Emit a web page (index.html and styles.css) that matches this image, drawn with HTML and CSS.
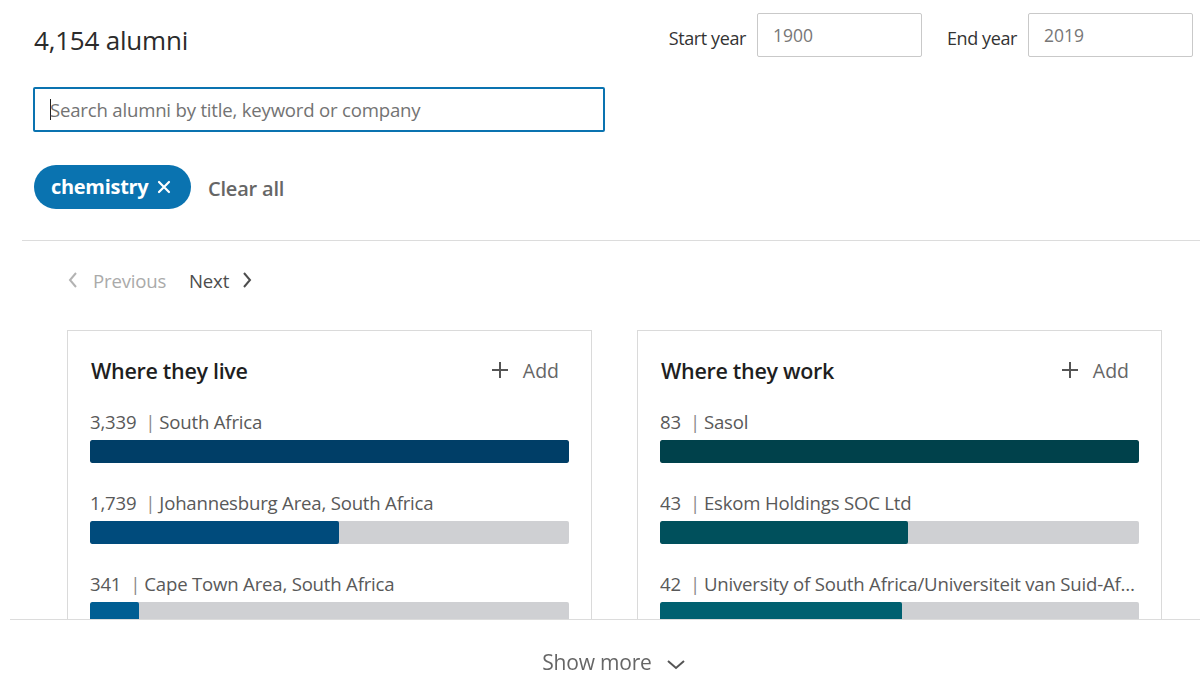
FILE: index.html
```html
<!DOCTYPE html>
<html lang="en">
<head>
<meta charset="utf-8">
<title>Alumni</title>
<link rel="stylesheet" href="styles.css">
</head>
<body>
<div class="page">
  <header class="head">
    <h1 class="count">4,154 alumni</h1>
    <div class="years">
      <label class="year-label">Start year</label>
      <div class="year-input">1900</div>
      <label class="year-label end">End year</label>
      <div class="year-input">2019</div>
    </div>
  </header>

  <div class="search"><span class="caret"></span><span class="placeholder">Search alumni by title, keyword or company</span></div>

  <div class="filters">
    <span class="chip">chemistry <svg class="chip-x" viewBox="0 0 14 14" width="14" height="14"><path d="M2 2 L12 12 M12 2 L2 12" stroke="#fff" stroke-width="2.2" stroke-linecap="round"/></svg></span>
    <span class="clear">Clear all</span>
  </div>

  <div class="divider"></div>

  <nav class="pager">
    <span class="prev"><svg viewBox="0 0 10 16" width="10" height="16"><path d="M8 1 L2 8 L8 15" fill="none" stroke="#b3b3b3" stroke-width="2"/></svg>Previous</span>
    <span class="next">Next<svg viewBox="0 0 10 16" width="10" height="16"><path d="M2 1 L8 8 L2 15" fill="none" stroke="#4d4d4d" stroke-width="2"/></svg></span>
  </nav>

  <section class="cards">
    <div class="card">
      <div class="card-head">
        <h2 class="card-title">Where they live</h2>
        <span class="add"><svg viewBox="0 0 16 16" width="16" height="16"><path d="M8 0 V16 M0 8 H16" stroke="#555" stroke-width="2"/></svg>Add</span>
      </div>
      <div class="row">
        <div class="label"><span class="num">3,339</span><span class="sep">|</span>South Africa</div>
        <div class="track"><div class="fill live1" style="width:100%"></div></div>
      </div>
      <div class="row">
        <div class="label"><span class="num">1,739</span><span class="sep">|</span>Johannesburg Area, South Africa</div>
        <div class="track"><div class="fill live2" style="width:52%"></div></div>
      </div>
      <div class="row">
        <div class="label"><span class="num">341</span><span class="sep">|</span>Cape Town Area, South Africa</div>
        <div class="track"><div class="fill live3" style="width:10.3%"></div></div>
      </div>
    </div>

    <div class="card">
      <div class="card-head">
        <h2 class="card-title">Where they work</h2>
        <span class="add"><svg viewBox="0 0 16 16" width="16" height="16"><path d="M8 0 V16 M0 8 H16" stroke="#555" stroke-width="2"/></svg>Add</span>
      </div>
      <div class="row">
        <div class="label"><span class="num">83</span><span class="sep">|</span>Sasol</div>
        <div class="track"><div class="fill work1" style="width:100%"></div></div>
      </div>
      <div class="row">
        <div class="label"><span class="num">43</span><span class="sep">|</span>Eskom Holdings SOC Ltd</div>
        <div class="track"><div class="fill work2" style="width:51.8%"></div></div>
      </div>
      <div class="row">
        <div class="label"><span class="num">42</span><span class="sep">|</span>University of South Africa/Universiteit van Suid-Afrika</div>
        <div class="track"><div class="fill work3" style="width:50.5%"></div></div>
      </div>
    </div>
  </section>
</div>

<footer class="more">
  <span class="more-btn">Show more<svg viewBox="0 0 20 12" width="20" height="12"><path d="M2 3 L10 10 L18 3" fill="none" stroke="#555" stroke-width="2"/></svg></span>
</footer>
</body>
</html>
```

FILE: styles.css
```css
html, body {
  margin: 0;
  padding: 0;
  height: 673px;
  overflow: hidden;
  background: #fff;
  font-family: "Open Sans", "Noto Sans", sans-serif;
  color: #333;
}

.page {
  padding: 0 0 0 34px;
}

/* top row: total count and year range */
.head {
  display: flex;
  justify-content: space-between;
  align-items: flex-start;
}

.count {
  margin: 22px 0 0 0;
  font-size: 26px;
  font-weight: 400;
  line-height: 36px;
  color: #2b2b2b;
  letter-spacing: -0.2px;
}

.years {
  display: flex;
  align-items: center;
  margin-top: 13px;
  margin-right: 7px;
}

.year-label {
  font-size: 18px;
  color: #333;
  margin-right: 11px;
  letter-spacing: -0.4px;
  padding-top: 5px;
}

.year-label.end {
  margin-left: 25px;
}

.year-input {
  box-sizing: border-box;
  width: 165px;
  height: 44px;
  border: 1px solid #c9c9c9;
  border-radius: 2px;
  padding: 0 0 0 15px;
  display: flex;
  align-items: center;
  font-size: 17.5px;
  color: #777;
  padding-bottom: 1px;
}

/* search field */
.search {
  box-sizing: border-box;
  margin-top: 29px;
  margin-left: -1px;
  width: 572px;
  height: 45px;
  border: 2px solid #0a73b0;
  border-radius: 2px;
  display: flex;
  align-items: center;
  padding-left: 15px;
}

.caret {
  display: inline-block;
  width: 1px;
  height: 21px;
  background: #222;
  margin-right: -1px;
}

.placeholder {
  font-size: 18.6px;
  color: #737373;
  letter-spacing: -0.2px;
}

/* active filter chips */
.filters {
  display: flex;
  align-items: center;
  margin-top: 33px;
  height: 44px;
}

.chip {
  box-sizing: border-box;
  height: 44px;
  width: 157px;
  border-radius: 22px;
  background: #0a73b0;
  color: #fff;
  font-weight: 700;
  font-size: 20px;
  display: flex;
  align-items: center;
  padding-left: 17px;
  padding-bottom: 2px;
  letter-spacing: -0.3px;
}

.chip-x {
  margin-left: 9px;
  margin-top: 2px;
}

.clear {
  margin-left: 17px;
  font-size: 20px;
  font-weight: 600;
  color: #666;
  margin-top: 2px;
  letter-spacing: -0.2px;
}

.divider {
  margin: 31px 0 0 -12px;
  height: 1px;
  background: #dcdcdc;
}

/* pagination */
.pager {
  display: flex;
  align-items: center;
  margin-top: 27px;
  margin-left: 34px;
  height: 24px;
  font-size: 18.6px;
}

.prev {
  display: flex;
  align-items: center;
  color: #aaa;
  letter-spacing: -0.2px;
}

.prev svg {
  margin-right: 15px;
}

.next {
  display: flex;
  align-items: center;
  color: #4d4d4d;
  margin-left: 23px;
  letter-spacing: -0.2px;
}

.next svg {
  margin-left: 13px;
}

/* insight cards */
.cards {
  display: flex;
  gap: 45px;
  margin-top: 38px;
  margin-left: 33px;
}

.card {
  box-sizing: border-box;
  width: 525px;
  border: 1px solid #dadada;
  padding: 25px 22px 0 22px;
  height: 400px;
}

.card-head {
  display: flex;
  justify-content: space-between;
  align-items: center;
  height: 28px;
}

.card-title {
  margin: 0 0 0 1px;
  font-size: 21.5px;
  font-weight: 600;
  color: #1f1f1f;
  letter-spacing: -0.3px;
}

.add {
  display: flex;
  align-items: center;
  font-size: 19.5px;
  color: #666;
  margin-right: 10px;
}

.add svg {
  margin-right: 15px;
}

.row {
  margin-top: 26px;
}

.row + .row {
  margin-top: 28px;
}

.label {
  font-size: 18.6px;
  line-height: 24px;
  color: #595959;
  white-space: nowrap;
  overflow: hidden;
  text-overflow: ellipsis;
  letter-spacing: -0.2px;
}

.num {
  margin-right: 9px;
}

.sep {
  margin-right: 4px;
  color: #8a8a8a;
}

.track {
  margin-top: 6px;
  height: 23px;
  background: #cfd0d3;
  border-radius: 2px;
  overflow: hidden;
}

.fill {
  height: 100%;
  border-radius: 2px;
}

.live1 { background: #003e67; }
.live2 { background: #004b7c; }
.live3 { background: #005e93; }
.work1 { background: #00414b; }
.work2 { background: #00505c; }
.work3 { background: #006070; }

/* footer that expands the list */
.more {
  position: fixed;
  left: 10px;
  right: 0;
  bottom: 0;
  height: 53px;
  background: #fff;
  border-top: 1px solid #dcdcdc;
  display: flex;
  justify-content: center;
}

.more-btn {
  display: flex;
  align-items: center;
  margin-top: 32px;
  height: 20px;
  line-height: 20px;
  font-size: 21px;
  color: #666;
  margin-left: 18px;
  letter-spacing: -0.2px;
}

.more-btn svg {
  margin-left: 14px;
  margin-top: 4px;
}
```
